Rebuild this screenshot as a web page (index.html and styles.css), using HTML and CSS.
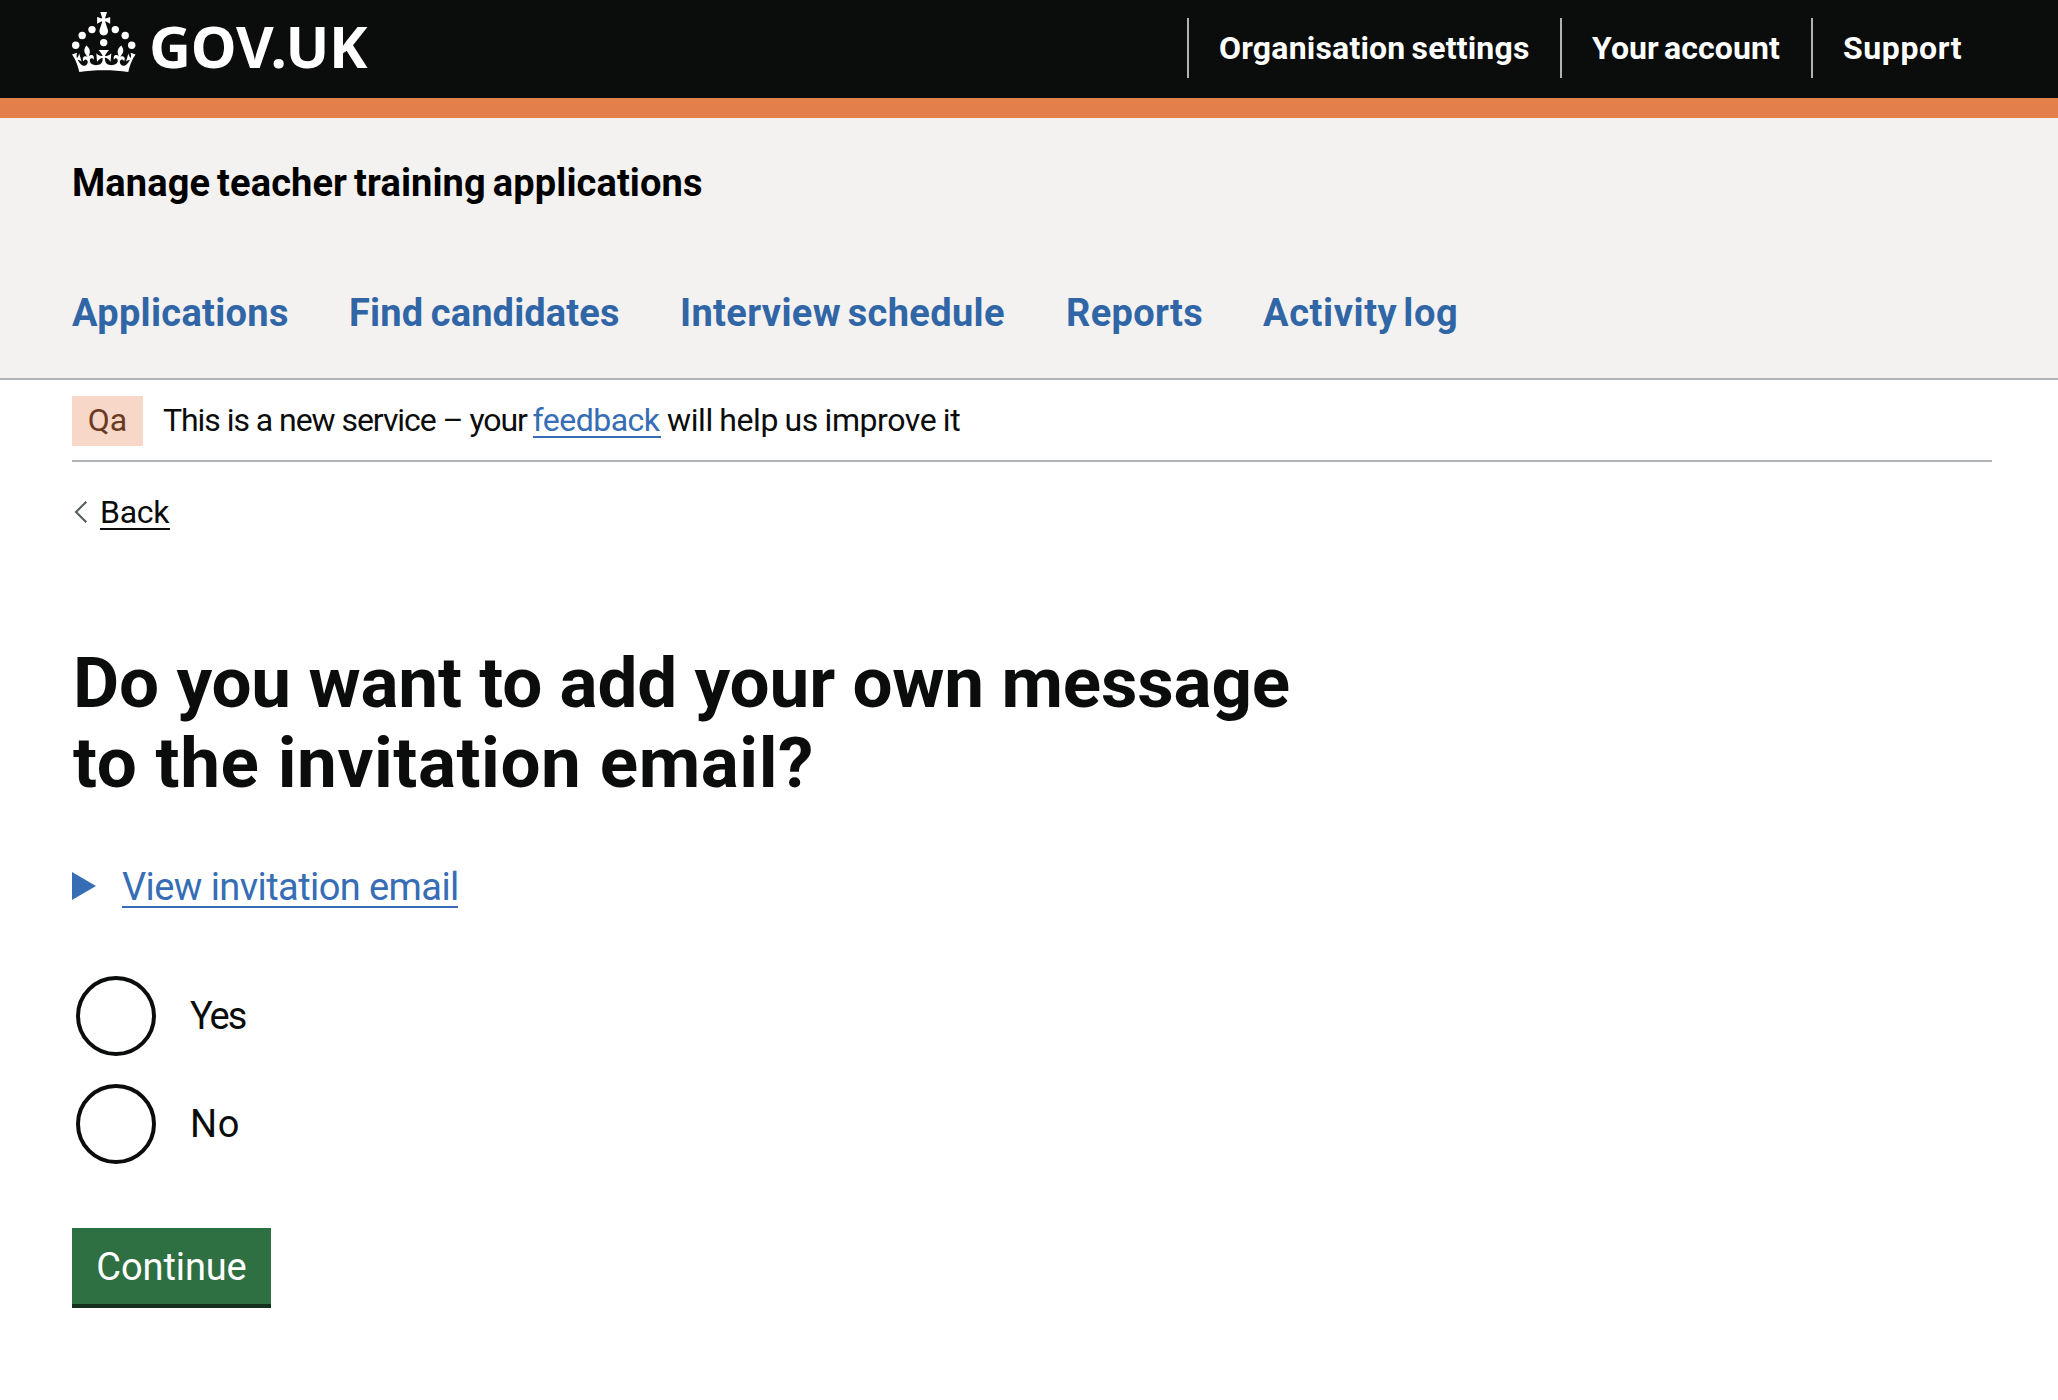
FILE: index.html
```html
<!DOCTYPE html>
<html lang="en">
<head>
<meta charset="utf-8">
<title>Manage teacher training applications</title>
<link rel="stylesheet" href="styles.css">
</head>
<body>
<header class="header">
  <a class="logo" href="#">
    <svg class="crown" viewBox="0 0 64 60" width="64" height="60" fill="currentColor" aria-hidden="true">
      <circle cx="20" cy="17.6" r="3.7"/><circle cx="10.2" cy="23.5" r="3.7"/><circle cx="3.7" cy="33.2" r="3.7"/>
      <circle cx="31.7" cy="30.6" r="3.7"/><circle cx="43.3" cy="17.6" r="3.7"/><circle cx="53.2" cy="23.5" r="3.7"/><circle cx="59.7" cy="33.2" r="3.7"/>
      <path d="M33.1,9.8c.2-.1.3-.3.5-.5l4.6,2.4v-6.8l-4.6,1.5c-.1-.2-.3-.3-.5-.5l1.9-5.9h-6.7l1.9,5.9c-.2.1-.3.3-.5.5l-4.6-1.5v6.8l4.6-2.4c.1.2.3.3.5.5l-2.6,8c-.9,2.8,1.2,5.7,4.1,5.7h0c3,0,5.1-2.9,4.1-5.7l-2.6-8ZM37,37.9s-3.4,3.8-4.1,6.1c2.2,0,4.2-.5,6.4-2.8l-.7,8.5c-2-2.8-4.4-4.1-5.7-3.8.1,3.1.5,6.7,5.8,7.2,3.7.3,6.7-1.5,7-3.8.4-2.6-2-4.3-3.7-1.6-1.4-4.5,2.4-6.1,4.9-3.2-1.9-4.5-1.8-7.7,2.4-10.9,3,4,2.6,7.3-1.2,11.1,2.4-1.3,6.2,0,4,4.6-1.2-2.8-3.7-2.2-4.2.2-.3,1.7.7,3.7,3,4.2,1.9.3,4.7-.9,7-5.9-1.3,0-2.4.7-3.9,1.7l2.4-8c.6,2.3,1.4,3.7,2.2,4.5.6-1.6.5-2.8,0-5.3l5,1.8c-2.6,3.6-5.2,8.7-7.3,17.5-7.4-1.1-15.7-1.7-24.5-1.7h0c-8.8,0-17.1.6-24.5,1.7-2.1-8.9-4.7-13.9-7.3-17.5l5-1.8c-.5,2.5-.6,3.7,0,5.3.8-.8,1.6-2.3,2.2-4.5l2.4,8c-1.5-1-2.6-1.7-3.9-1.7,2.3,5,5.2,6.2,7,5.9,2.3-.4,3.3-2.4,3-4.2-.5-2.4-3-3.1-4.2-.2-2.2-4.6,1.6-6,4-4.6-3.7-3.7-4.2-7.1-1.2-11.1,4.2,3.2,4.3,6.4,2.4,10.9,2.5-2.8,6.3-1.3,4.9,3.2-1.8-2.7-4.1-1-3.7,1.6.3,2.3,3.3,4.1,7,3.8,5.4-.5,5.7-4.2,5.8-7.2-1.3-.2-3.7,1-5.7,3.8l-.7-8.5c2.2,2.3,4.2,2.7,6.4,2.8-.7-2.3-4.1-6.1-4.1-6.1h10.6Z"/>
    </svg>
    <span class="wordmark">GOV.UK</span>
  </a>
  <nav class="account-nav">
    <a class="account-organisation" href="#">Organisation settings</a>
    <a class="account-profile" href="#">Your account</a>
    <a class="account-support" href="#">Support</a>
  </nav>
</header>
<div class="service">
  <div class="service-name">Manage teacher training applications</div>
  <nav class="service-nav">
    <a class="nav-applications" href="#">Applications</a>
    <a class="nav-candidates" href="#">Find candidates</a>
    <a class="nav-interviews" href="#">Interview schedule</a>
    <a class="nav-reports" href="#">Reports</a>
    <a class="nav-activity" href="#">Activity log</a>
  </nav>
</div>
<div class="container">
  <div class="phase-banner">
    <strong class="tag">Qa</strong>
    <span class="phase-text"><span class="phase-start">This is a new service – your</span> <a class="feedback" href="#">feedback</a> <span class="phase-end">will help us improve it</span></span>
  </div>
  <a class="back" href="#">
    <svg class="chevron" viewBox="0 0 14 24" width="14" height="24" fill="none" stroke="#505a5f" stroke-width="2" aria-hidden="true"><path d="M12.3 1.7 2 12l10.3 10.3"/></svg>
    <span class="back-text">Back</span>
  </a>
  <main>
    <h1 class="heading"><span class="heading-first">Do you want to add your own message</span><br><span class="heading-second">to the invitation email?</span></h1>
    <div class="details">
      <svg class="arrow" viewBox="0 0 24 28" width="24" height="28" fill="currentColor" aria-hidden="true"><path d="M0 0 24 14 0 28z"/></svg>
      <span class="details-text">View invitation email</span>
    </div>
    <div class="radios">
      <label class="radio"><input class="radio-input" type="radio" name="message"><span class="radio-yes">Yes</span></label>
      <label class="radio"><input class="radio-input" type="radio" name="message"><span class="radio-no">No</span></label>
    </div>
    <button class="button" type="button">Continue</button>
  </main>
</div>
</body>
</html>
```
FILE: styles.css
```css
* { box-sizing: border-box; }
body {
  margin: 0;
  background: #fff;
  color: #0b0c0c;
  font-family: Roboto, "Noto Sans", sans-serif;
  font-size: 38px;
  white-space: nowrap;
}
a { color: inherit; text-decoration: none; }

.header {
  display: flex;
  justify-content: space-between;
  height: 118px;
  padding: 0 66px 0 72px;
  background: #0b0c0c;
  border-bottom: 20px solid #e27f4a;
  color: #fff;
}
.logo { display: flex; gap: 13px; }
.crown { margin-top: 12px; }
.wordmark {
  margin-top: 6px;
  font: 700 58px/80px "Noto Sans", sans-serif;
  letter-spacing: -0.2px;
}
.account-nav {
  display: flex;
  margin-top: 18px;
  font-size: 32px;
  font-weight: 700;
  line-height: 60px;
}
.account-nav a { height: 60px; padding-left: 30px; border-left: 2px solid #b1b4b6; }
.account-organisation { width: 373px; letter-spacing: 0.19px; word-spacing: -2px; }
.account-profile { width: 251px; letter-spacing: 0.1px; word-spacing: -3px; }
.account-support { width: 181px; letter-spacing: 0.6px; }

.service {
  height: 262px;
  padding: 40px 72px 0;
  background: #f3f2f1;
  border-bottom: 2px solid #b1b4b6;
  font-weight: 700;
  line-height: 50px;
}
.service-name { color: #000; letter-spacing: 0.1px; word-spacing: -2.5px; }
.service-nav { display: flex; margin-top: 80px; color: #3065a6; }
.nav-applications { width: 276px; letter-spacing: 0.3px; }
.nav-candidates { width: 331px; padding-left: 1px; letter-spacing: 0.14px; word-spacing: -2px; }
.nav-interviews { width: 386px; padding-left: 1px; letter-spacing: 0.35px; word-spacing: -3px; }
.nav-reports { width: 198px; padding-left: 1px; letter-spacing: 0.3px; }
.nav-activity { letter-spacing: 0.6px; word-spacing: -4px; }

.container { width: 1920px; margin-left: 72px; }
.phase-banner {
  display: flex;
  gap: 20px;
  height: 82px;
  padding-top: 16px;
  border-bottom: 2px solid #b1b4b6;
  font-size: 32px;
  line-height: 49px;
}
.tag {
  width: 71px;
  height: 50px;
  background: #f6d7c8;
  color: #6b3a22;
  font-weight: 400;
  text-align: center;
}
.phase-text { display: flex; }
.phase-start { width: 369.5px; letter-spacing: -1.05px; }
.feedback { width: 128.5px; height: 42px; border-bottom: 2px solid #366db5; color: #366db5; letter-spacing: -0.5px; }
.phase-end { margin-left: 6px; letter-spacing: -0.4px; word-spacing: -1px; }

.back { display: flex; width: 98px; height: 48px; margin-top: 26px; font-size: 32px; line-height: 48px; }
.chevron { margin: 12px 12px 0 2px; }
.back-text { width: 70px; height: 42px; border-bottom: 2px solid #0b0c0c; letter-spacing: -0.3px; }

.heading { margin: 107px 0 0; padding-left: 1px; font-size: 71px; font-weight: 700; line-height: 80px; }
.heading-first { letter-spacing: -0.16px; }
.heading-second { letter-spacing: 0.58px; }

.details { display: flex; gap: 26px; margin-top: 58px; color: #366db5; line-height: 52px; }
.arrow { margin-top: 11px; }
.details-text { width: 336px; height: 47px; border-bottom: 2px solid #366db5; letter-spacing: -0.58px; }

.radios { display: flex; flex-direction: column; gap: 28px; margin: 68px 0 0 4px; }
.radio { display: flex; gap: 34px; height: 80px; line-height: 80px; }
.radio-input { appearance: none; width: 80px; height: 80px; margin: 0; border: 4px solid #0b0c0c; border-radius: 50%; background: #fff; }
.radio-yes { letter-spacing: -2px; }
.radio-no { letter-spacing: 0.6px; }

.button {
  display: block;
  width: 199px;
  height: 80px;
  margin: 64px 0 0;
  padding: 2px 0 0;
  border: 0;
  border-bottom: 4px solid #12301c;
  border-radius: 0;
  background: #2f7043;
  color: #fff;
  font: 400 38px/74px Roboto, "Noto Sans", sans-serif;
  letter-spacing: -0.1px;
}
```
